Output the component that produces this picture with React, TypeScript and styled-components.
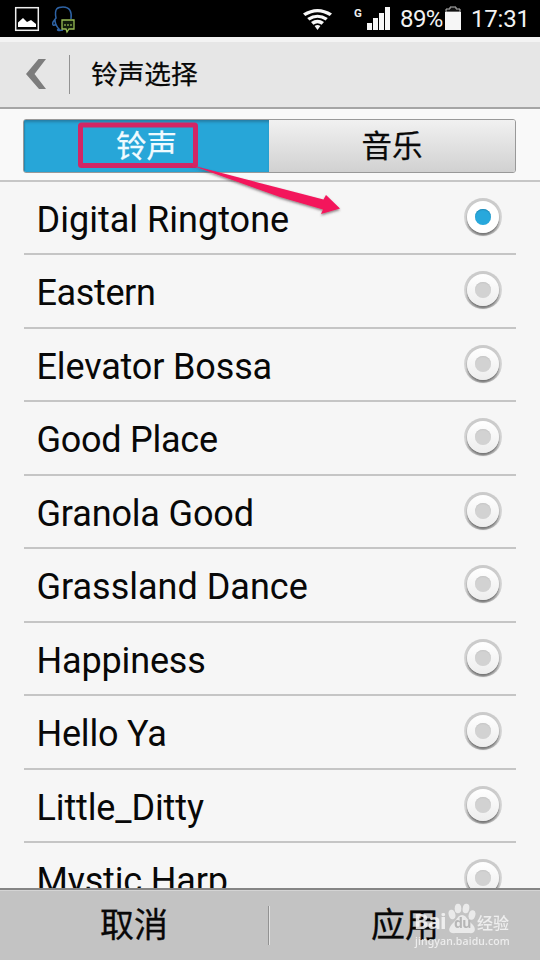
import React, { useState } from "react";
import styled, { createGlobalStyle, css } from "styled-components";

const GlobalStyle = createGlobalStyle`
  * { box-sizing: border-box; }
  body { margin: 0; background: #f6f6f6; }
  button { border: 0; padding: 0; margin: 0; background: none; color: inherit; font: inherit; }
`;

const Screen = styled.main`
  position: relative;
  display: flex;
  flex-direction: column;
  width: 540px;
  height: 960px;
  overflow: hidden;
  background: #f6f6f6;
  color: #080808;
  font-family: Roboto, "Noto Sans CJK SC", sans-serif;
`;

const StatusBar = styled.div`
  display: flex;
  flex: none;
  align-items: center;
  height: 37px;
  background: #000;
  color: #f2f2f2;
`;

const StatusIcons = styled.svg`
  display: block;
  flex: none;
  width: 398px;
  height: 37px;
`;

const Percent = styled.span`
  width: 46px;
  font-size: 24px;
  line-height: 37px;
  padding-top: 2px;
  letter-spacing: -0.6px;
  margin-left: 2px;
`;

const Battery = styled.svg`
  display: block;
  width: 16px;
  height: 37px;
  margin-left: -1px;
`;

const Clock = styled.span`
  margin-left: 10px;
  padding-top: 2px;
  font-size: 24px;
  line-height: 37px;
  letter-spacing: -0.2px;
`;

const Header = styled.header`
  display: flex;
  flex: none;
  align-items: center;
  height: 72px;
  border-top: 5px solid #f3f3f3;
  border-bottom: 2px solid #a5a5a5;
  background: #e6e6e6;
`;

const BackButton = styled.button`
  display: flex;
  align-items: center;
  width: 70px;
  height: 39px;
  padding-left: 25px;
  padding-bottom: 2px;
  border-right: 1px solid #929292;
`;

const Title = styled.h1`
  margin: 0 0 0 21px;
  font-size: 26.7px;
  font-weight: 400;
  line-height: 40px;
  -webkit-text-stroke: 0.25px;
`;

const TabArea = styled.div`
  flex: none;
  height: 72.5px;
  padding: 10px 24px 0 23px;
  background: #f9f9f9;
  border-bottom: 2px solid #c6c6c6;
`;

const Tabs = styled.div`
  display: grid;
  grid-template-columns: 245px 1fr;
  height: 54px;
  overflow: hidden;
  border: 1px solid #999;
  border-radius: 3px;
`;

const Tab = styled.button<{ $active: boolean }>`
  padding-top: 2px;
  font-size: 30.5px;
  line-height: 50px;
  -webkit-text-stroke: 0.25px;
  ${({ $active }) =>
    $active
      ? css`
          background: #27a6d8;
          color: #f0fbff;
          box-shadow: inset 0 3px 3px -1px #267da5, inset 1px 0 1px #278bb4;
        `
      : css`
          background: linear-gradient(#f1f1f1, #d1d1d1);
          color: #090909;
        `}
`;

const List = styled.div`
  flex: 1;
  min-height: 0;
  overflow: hidden;
  padding: 0 24px;
`;

const Row = styled.div`
  display: flex;
  justify-content: space-between;
  height: 73.5px;
  padding: 0 14px 0 12.5px;
  border-bottom: 2px solid #c5c5c5;
`;

const Label = styled.span<{ $spacing: number }>`
  font-size: 36px;
  line-height: 76px;
  white-space: nowrap;
  letter-spacing: ${({ $spacing }) => $spacing}px;
`;

const Radio = styled.button<{ $checked: boolean }>`
  display: grid;
  place-items: center;
  flex: none;
  width: 38px;
  height: 38px;
  margin-top: 16px;
  border-radius: 50%;
  background: linear-gradient(#cbcbcb 15%, #d9d9d9 60%, #b5b5b5);
  &::before {
    content: "";
    grid-area: 1 / 1;
    width: 32px;
    height: 32px;
    border-radius: 50%;
    background: linear-gradient(#fff, ${({ $checked }) => ($checked ? "#fff" : "#ededed")});
    box-shadow: 0 2px 2px #747474;
  }
  &::after {
    content: "";
    grid-area: 1 / 1;
    width: 16px;
    height: 16px;
    border-radius: 50%;
    background: ${({ $checked }) => ($checked ? "#28a8dc" : "#d2d2d2")};
    box-shadow: inset 0 1px 1px ${({ $checked }) => ($checked ? "#238bb7" : "#c7c7c7")};
  }
`;

const Footer = styled.footer`
  display: flex;
  flex: none;
  align-items: center;
  height: 72px;
  background: #c3c3c3;
  border-top: 2px solid #858585;
  box-shadow: inset 0 1px #d4d4d4;
`;

const FooterButton = styled.button`
  flex: 1;
  height: 70px;
  font-size: 34px;
  line-height: 68px;
  -webkit-text-stroke: 0.3px;
  &:first-child { flex: 0 0 268px; }
`;

const Divider = styled.i`
  width: 2px;
  height: 39px;
  background: #929292;
  border-right: 1px solid #e2e2e2;
`;

const Arrow = styled.svg`
  position: absolute;
  top: 118px;
  left: 74px;
  width: 276px;
  height: 104px;
  pointer-events: none;
`;

const Watermark = styled.div`
  position: absolute;
  top: 901px;
  left: 414px;
  width: 100px;
  height: 48px;
  color: #f4f4f4;
  opacity: 0.88;
  pointer-events: none;
`;

const Brand = styled.div`
  display: flex;
  align-items: center;
  height: 34px;
  font: 700 22px/40px "Noto Sans", sans-serif;
`;

const BrandName = styled.span`
  width: 34px;
  letter-spacing: -0.9px;
  padding-top: 3px;
`;

const Paw = styled.span`
  position: relative;
  width: 28px;
  height: 31px;
  svg { display: block; }
`;

const PawText = styled.span`
  position: absolute;
  top: 13px;
  left: 6px;
  color: #b5b5b5;
  font: 700 14px/14px "Noto Sans", sans-serif;
  letter-spacing: -0.5px;
`;

const BrandTopic = styled.span`
  margin-left: 1px;
  font: 500 16px/22px "Noto Sans CJK SC", sans-serif;
  padding-top: 7px;
  white-space: nowrap;
`;

const Website = styled.div`
  margin-left: 1px;
  font: 500 10.5px/12px "Noto Sans", sans-serif;
  letter-spacing: 0.14px;
  white-space: nowrap;
`;

const ringtones = [
  { name: "Digital Ringtone", spacing: 0.02 },
  { name: "Eastern", spacing: -0.38 },
  { name: "Elevator Bossa", spacing: -0.15 },
  { name: "Good Place", spacing: -0.25 },
  { name: "Granola Good", spacing: -0.15 },
  { name: "Grassland Dance", spacing: 0 },
  { name: "Happiness", spacing: -0.15 },
  { name: "Hello Ya", spacing: -0.2 },
  { name: "Little_Ditty", spacing: -0.12 },
  { name: "Mystic Harp", spacing: -0.16 },
];

function StatusGlyphs() {
  return (
    <StatusIcons viewBox="0 0 398 37" fill="none">
      <rect x="15.7" y="7.7" width="22.6" height="22.6" stroke="#eee" strokeWidth="1.5" />
      <path d="M18 27V22.5L23 18L27 22L31 20L36 24V27Z" fill="#fff" />
      <path d="M56 24C54 26 52 26 53 22L56 18C54 8 58 7 63 7C70 7 72 12 71 19M55 20C55 25 57 27 59 29C56 30 58 31 63 30" stroke="#2e63a5" strokeWidth="1.5" />
      <path d="M62 20H74V29H69L67 32L66 29H62Z" fill="#111c0c" stroke="#99bd55" strokeWidth="1.3" />
      <path d="M64.5 25h1m2 0h1m2 0h1" stroke="#b2db64" strokeWidth="2" />
      <path d="M303 13.5Q317.5 4.5 332 13.5L329.7 16Q317.5 8.3 305.3 16ZM307.2 18Q317.5 11.3 327.8 18L325.6 20.5Q317.5 15.2 309.4 20.5ZM311 22Q317.5 17.5 324 22L321.6 24.7Q317.5 21.7 313.4 24.7ZM314.6 26Q317.5 23.8 320.4 26L317.5 30Z" fill="#f7f7f7" />
      <text x="354" y="17" fill="#eee" fontFamily="Roboto" fontSize="11.5" fontWeight="700">G</text>
      <path d="M367 23h5v7h-5zM373 18h5v12h-5zM379 13h5v17h-5zM385 7h5v23h-5z" fill="#f7f7f7" />
    </StatusIcons>
  );
}

export default function App() {
  const [tab, setTab] = useState(0);
  const [selected, setSelected] = useState(0);
  return (
    <>
      <GlobalStyle />
      <Screen>
        <StatusBar>
          <StatusGlyphs />
          <Percent>89%</Percent>
          <Battery viewBox="0 0 16 37"><path d="M1 12V9h4V7h6v2h4v3Z" fill="#111" stroke="#bbb" /><path d="M0 12H16V30H0Z" fill="#f6f6f6" /></Battery>
          <Clock>17:31</Clock>
        </StatusBar>
        <Header>
          <BackButton aria-label="返回">
            <svg width="21" height="32" viewBox="0 0 21 32"><path d="M13.5 1H21L9.5 16L21 31H14L1 16Z" fill="#7d7d7d" /></svg>
          </BackButton>
          <Title>铃声选择</Title>
        </Header>
        <TabArea>
          <Tabs>
            {["铃声", "音乐"].map((name, index) => (
              <Tab key={name} $active={tab === index} onClick={() => setTab(index)}>{name}</Tab>
            ))}
          </Tabs>
        </TabArea>
        <List>
          {ringtones.map(({ name, spacing }, index) => (
            <Row key={name}>
              <Label $spacing={spacing}>{name}</Label>
              <Radio aria-label={name} $checked={selected === index} onClick={() => setSelected(index)} />
            </Row>
          ))}
        </List>
        <Footer><FooterButton>取消</FooterButton><Divider /><FooterButton>应用</FooterButton></Footer>
        <Arrow viewBox="74 118 276 104">
          <defs><filter id="arrowShadow" x="-20%" y="-20%" width="140%" height="150%"><feDropShadow dx="0" dy="1.5" stdDeviation="1.2" floodColor="#403038" floodOpacity=".6" /></filter></defs>
          <rect x="80.5" y="125" width="115" height="40.5" rx="1" fill="none" stroke="#d12665" strokeWidth="5" />
          <path d="M189 164.5L283 189L323.5 199.5L326 195L340 208.5L321 214L323 209.5L280 197Z" fill="#f3145c" filter="url(#arrowShadow)" />
        </Arrow>
        <Watermark>
          <Brand>
            <BrandName>Bai</BrandName>
            <Paw>
              <svg width="28" height="31" viewBox="0 0 28 31" fill="#f0f0f0"><ellipse cx="4" cy="11.5" rx="3.3" ry="4.8" transform="rotate(-15 4 11.5)" /><ellipse cx="10" cy="5.5" rx="3.3" ry="4.8" /><ellipse cx="18" cy="5.5" rx="3.3" ry="4.8" transform="rotate(10 18 5.5)" /><ellipse cx="24" cy="12" rx="3.3" ry="4.8" transform="rotate(15 24 12)" /><path d="M7 18C10 14 11 12 14 12S18 14 21 18L25 22C29 27 26 31 21 30H8C1 31 -1 27 4 21Z" /></svg>
              <PawText>du</PawText>
            </Paw>
            <BrandTopic>经验</BrandTopic>
          </Brand>
          <Website>jingyan.baidu.com</Website>
        </Watermark>
      </Screen>
    </>
  );
}
